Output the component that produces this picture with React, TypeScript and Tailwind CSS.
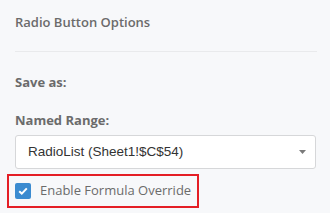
export default function App() {
  return (
    <div className="h-[213px] w-[330px] overflow-hidden bg-[#f7f8fa] font-['Open_Sans',sans-serif]">
      <div className="px-[15px] pt-[13px]">
        <h2 className="text-[13px] font-semibold leading-[18px] text-[#6b6b6b]">Radio Button Options</h2>
        <div className="mt-[20px] mr-[-2px] h-px bg-[#e9eaec]" />
        <div className="mt-[21px] text-[13px] font-bold leading-[18px] text-[#6b6b6b]">Save as:</div>
        <div className="mt-[20px] text-[13px] font-bold leading-[18px] text-[#6b6b6b]">Named Range:</div>
        <div className="relative mt-[6px] mr-[-1px] flex h-[34px] items-center justify-between rounded-[3px] border border-[#d6d7d9] bg-white">
          <span className="ml-[12px] whitespace-nowrap font-['Liberation_Sans',Arial,sans-serif] text-[13.5px] text-[#333]">RadioList (Sheet1!$C$54)</span>
          <svg className="mr-[9px]" width="7" height="4" viewBox="0 0 7 4">
            <path d="M0 0H7L3.5 4Z" fill="#7a7a7a" />
          </svg>
        </div>
      </div>
      <div className="ml-[7px] mt-[5px] flex h-[34px] w-[192px] items-center border-2 border-[#e41e25] pl-[6px]">
        <span className="flex h-[16px] w-[16px] shrink-0 items-center justify-center rounded-[2px] bg-[#3b8bd0]">
          <svg width="10" height="8" viewBox="0 0 10 8">
            <path d="M1.2 4.2L3.8 6.6L8.8 1.4" fill="none" stroke="#fff" strokeWidth="2" />
          </svg>
        </span>
        <span className="ml-[9px] whitespace-nowrap text-[13px] text-[#6b6b6b]">Enable Formula Override</span>
      </div>
    </div>
  );
}
